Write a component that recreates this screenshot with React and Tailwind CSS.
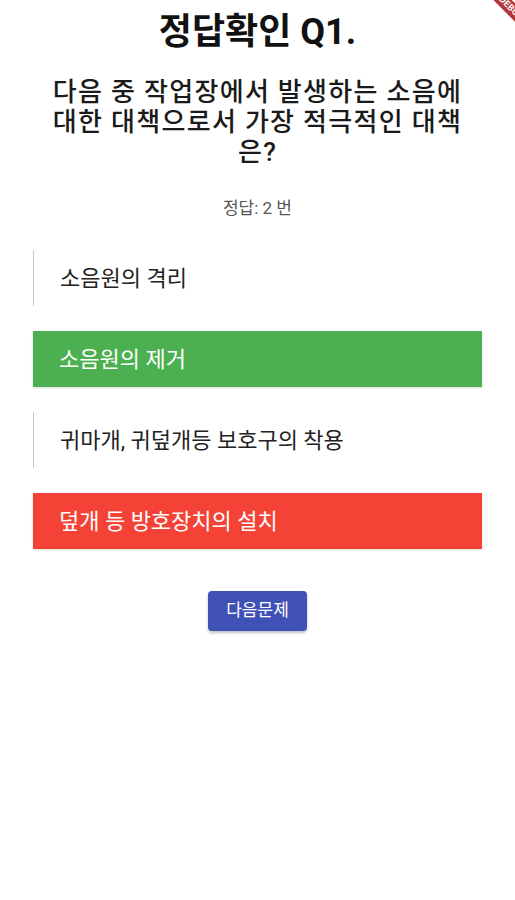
export default function App() {
  const options = [
    { text: "소음원의 격리", state: "none" },
    { text: "소음원의 제거", state: "correct" },
    { text: "귀마개, 귀덮개등 보호구의 착용", state: "none" },
    { text: "덮개 등 방호장치의 설치", state: "wrong" },
  ];

  const optionClass = {
    none: "bg-white text-[#222] border-l border-[#c8c8c8]",
    correct: "bg-[#4caf50] text-white shadow-[0_1px_2px_rgba(0,0,0,0.15)]",
    wrong: "bg-[#f44336] text-white shadow-[0_1px_2px_rgba(0,0,0,0.15)]",
  };

  return (
    <div
      className="relative w-[515px] h-[900px] bg-white overflow-hidden"
      style={{ fontFamily: "Roboto, 'Noto Sans CJK KR', sans-serif" }}
    >
      {/* debug ribbon, mostly off-screen */}
      <div className="absolute top-[2px] right-[-56px] w-[120px] h-[13px] bg-[#b3363a] rotate-45 flex items-center justify-center text-[9px] font-bold text-white tracking-wide">
        DEBUG
      </div>

      <div className="flex flex-col items-center">
        <h1 className="pt-[12px] text-[36px] leading-[40px] font-bold text-[#111]">정답확인 Q1.</h1>

        <p className="mt-[25px] px-[40px] text-center text-[26px] leading-[30px] tracking-[1.3px] font-medium text-[#1a1a1a]">
          다음 중 작업장에서 발생하는 소음에 대한 대책으로서 가장 적극적인 대책은?
        </p>

        <p className="mt-[30px] text-[17px] leading-[22px] text-[#555]">정답: 2 번</p>

        <div className="mt-[31px] w-[449px] flex flex-col gap-[25px]">
          {options.map((o, i) => (
            <div
              key={i}
              className={`h-[56px] flex items-center pl-[26px] text-[22px] ${optionClass[o.state]}`}
            >
              {o.text}
            </div>
          ))}
        </div>

        <button className="mt-[42px] h-[40px] w-[99px] rounded-[4px] bg-[#3f51b5] text-white text-[17px] shadow-[0_2px_3px_rgba(0,0,0,0.25)]">
          다음문제
        </button>
      </div>
    </div>
  );
}
